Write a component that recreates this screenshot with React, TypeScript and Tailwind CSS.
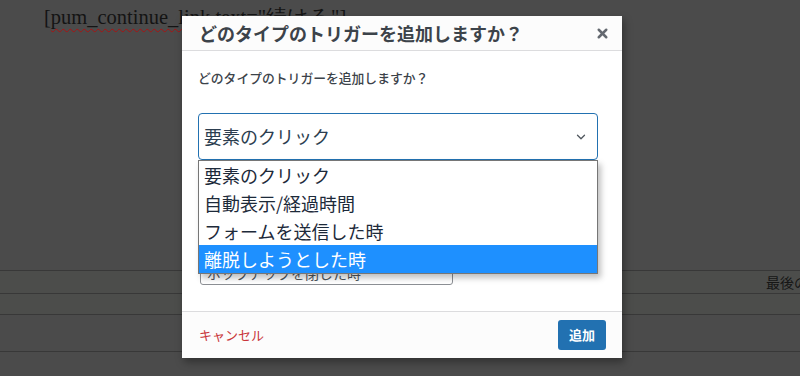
import { X, ChevronDown } from 'lucide-react';

const jp = { fontFamily: '"Noto Sans CJK JP", "Noto Sans", sans-serif' };

const options = ['要素のクリック', '自動表示/経過時間', 'フォームを送信した時', '離脱しようとした時'];

export default function App() {
  return (
    <div className="relative w-[800px] h-[376px] overflow-hidden bg-[#4b4b4b]" style={jp}>
      {/* page behind the overlay */}
      <div className="h-[270px] pl-[44px] pt-[5px]">
        <p className="text-[20.5px] leading-[24px] text-[#141414] font-['Liberation_Serif',serif]">
          [<span className="underline decoration-wavy decoration-[#a31414] decoration-1 underline-offset-[4px]">pum_continue_link</span> text=&quot;続ける&quot;]
        </p>
      </div>
      <div className="h-[23px] border-t border-[#383838] bg-[#4c4d4b] flex items-center justify-end">
        <span className="text-[14px] text-[#161616] whitespace-nowrap w-[34px] overflow-hidden">最後の</span>
      </div>
      <div className="h-[21px] border-t border-[#383838] bg-[#4c4d4b]" />
      <div className="h-[37px] border-t border-[#383838]" />
      <div className="h-[25px] border-t border-[#383838]" />

      {/* modal */}
      <div className="absolute left-[182px] top-[16px] w-[440px] h-[342px] bg-white flex flex-col shadow-[2px_4px_8px_rgba(0,0,0,0.35)]">
        <div className="h-[35px] shrink-0 bg-[#fcfcfc] border-b border-[#dcdcde] flex items-center justify-between pl-[17px] pr-[12px]">
          <h2 className="text-[18px] font-bold text-[#3c434a] leading-none">どのタイプのトリガーを追加しますか？</h2>
          <X className="w-[15px] h-[15px] text-[#646970]" strokeWidth={4} />
        </div>

        <div className="relative flex-1 pl-[16px] pr-[24px] pt-[17px]">
          <p className="text-[12.8px] font-medium text-[#3c434a] leading-[20px]">どのタイプのトリガーを追加しますか？</p>

          <div className="relative mt-[25px]">
            <div className="h-[47px] border-[1.5px] border-[#2271b1] rounded-[4px] flex items-center justify-between pl-[5px] pr-[9px] bg-white">
              <span className="text-[18px] text-[#2c3e50]">要素のクリック</span>
              <ChevronDown className="w-[14px] h-[14px] text-[#50575e]" strokeWidth={2.2} />
            </div>

            {/* field partly hidden under the open list */}
            <div className="mt-[102px] ml-[2px] w-[253px] h-[23px] border border-[#8c8f94] rounded-[3px] px-[6px] text-[14px] leading-[20px] text-[#50575e]">
              ポップアップを閉じた時
            </div>

            {/* open option list */}
            <div className="absolute left-0 top-[47px] w-[400px] bg-white border border-[#767676] shadow-[3px_4px_6px_rgba(0,0,0,0.25)]">
              {options.map((o, i) => (
                <div
                  key={o}
                  className={
                    i === 3
                      ? 'h-[28px] flex items-center px-[5px] text-[18px] bg-[#1e90ff] text-white'
                      : 'h-[28px] flex items-center px-[5px] text-[18px] text-[#1d2a3a]'
                  }
                >
                  {o}
                </div>
              ))}
            </div>
          </div>
        </div>

        <div className="h-[47px] shrink-0 bg-[#fcfcfc] border-t border-[#dcdcde] flex items-center justify-between pl-[17px] pr-[16px]">
          <button className="text-[13px] text-[#c9353a]">キャンセル</button>
          <button className="h-[30px] w-[48px] rounded-[3px] bg-[#2271b1] text-white text-[13px] font-bold">追加</button>
        </div>
      </div>
    </div>
  );
}
